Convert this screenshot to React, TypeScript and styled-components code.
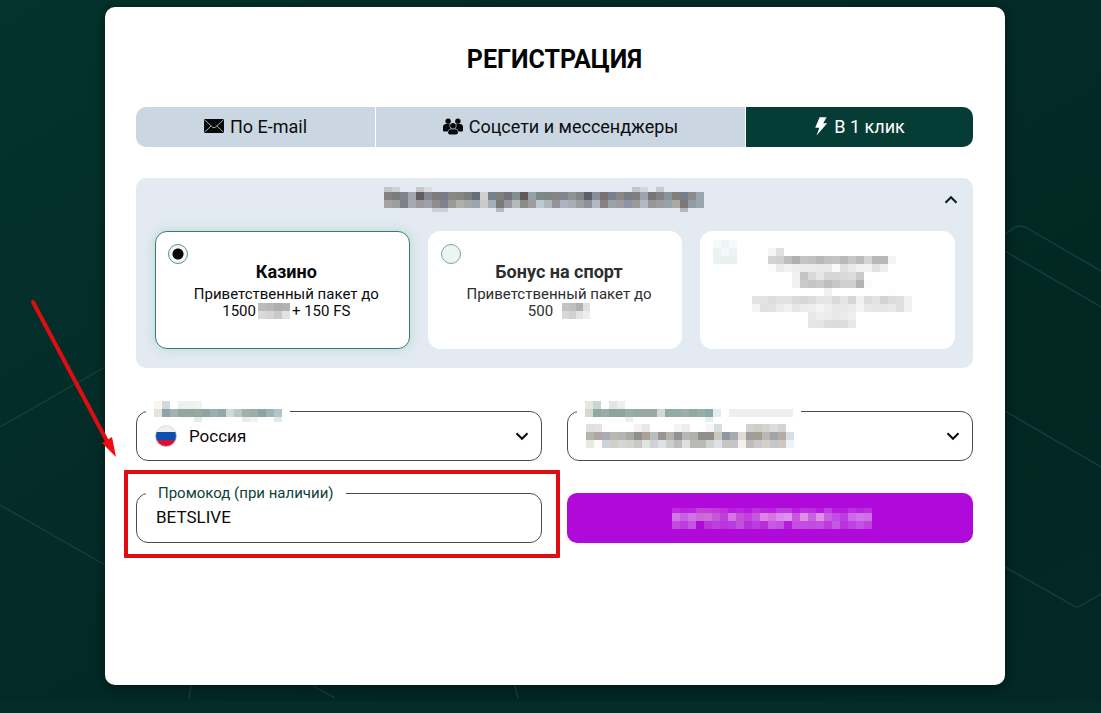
import React, { useState } from "react";
import styled, { createGlobalStyle } from "styled-components";

const GlobalStyle = createGlobalStyle`
  *, *::before, *::after { box-sizing: border-box; }
  body {
    margin: 0;
    background: #03292a;
    font-family: Roboto, "Liberation Sans", sans-serif;
    color: #0a0a0a;
  }
  button, input, select { font-family: inherit; }
`;

const Page = styled.div`
  position: relative;
  min-height: 100vh;
  padding: 7px 0 28px 9px;
  overflow: hidden;
  background: linear-gradient(to bottom, transparent calc(100% - 13px), #042d29 calc(100% - 9px)),
    linear-gradient(150deg, #04322c 0%, #032b27 45%, #022723 70%, #032825 100%);
`;

const Backdrop = styled.svg`
  position: absolute;
  inset: 0;
  width: 100%;
  height: 100%;
`;

const Card = styled.main`
  position: relative;
  max-width: 900px;
  margin: 0 auto;
  padding: 37px 32px 142px 31px;
  border-radius: 10px;
  background: #fff;
  box-shadow: 0 2px 12px rgba(0, 0, 0, 0.45);
`;

const Title = styled.h1`
  margin: 0 0 31px;
  font-size: 25px;
  line-height: 32px;
  font-weight: 700;
  text-align: center;
  color: #050505;
`;

const Tabs = styled.div`
  display: grid;
  grid-template-columns: 239fr 369fr 227fr;
  gap: 1px;
  border-radius: 10px;
  overflow: hidden;
`;

const Tab = styled.button<{ $active?: boolean }>`
  display: flex;
  align-items: center;
  justify-content: center;
  gap: 6px;
  height: 40px;
  padding: 0 0 2px;
  border: 0;
  font-size: 18px;
  color: ${(p) => (p.$active ? "#fff" : "#0b0d10")};
  background: ${(p) => (p.$active ? "#053d36" : "#cad6e1")};
  cursor: pointer;
`;

const BonusPanel = styled.section`
  margin-top: 31px;
  padding: 9px 18px 19px 19px;
  border-radius: 10px;
  background: #e4eaf1;
`;

const BonusHeader = styled.header`
  display: flex;
  align-items: center;
  height: 25px;
  margin-bottom: 19px;
`;

const BonusHeading = styled.div`
  flex: 1;
  display: flex;
  justify-content: center;
`;

const Collapse = styled.button`
  display: flex;
  justify-content: flex-end;
  width: 25px;
  padding: 0;
  margin-right: -3px;
  border: 0;
  background: none;
  color: #0b1a1a;
`;

const BonusList = styled.div`
  display: grid;
  grid-template-columns: repeat(3, 1fr);
  gap: 18px;
`;

const BonusCard = styled.label<{ $selected?: boolean }>`
  display: grid;
  height: 118px;
  padding: 8px 12px;
  border: 1px solid ${(p) => (p.$selected ? "#3f7a72" : "#fff")};
  border-radius: 12px;
  background: #fff;
  color: ${(p) => (p.$selected ? "#0a0a0a" : "#2e2e2e")};
  box-shadow: ${(p) => (p.$selected ? "0 0 12px rgba(90, 190, 165, 0.35)" : "none")};
  cursor: pointer;

  > * { grid-area: 1 / 1; }
`;

const Radio = styled.input`
  appearance: none;
  width: 20px;
  height: 20px;
  margin: 4px 0 0;
  border: 1px solid #7fa39d;
  border-radius: 50%;
  background: #edf5f4;

  &:checked {
    border-color: #5c9088;
    background: radial-gradient(circle, #050505 5px, #f1f8f7 6px);
  }
`;

const BonusText = styled.div<{ $raised?: boolean }>`
  place-self: center;
  padding: ${(p) => (p.$raised ? "0 0 4px 8px" : "1px 0 0 8px")};
  text-align: center;
`;

const BonusName = styled.div`
  margin-bottom: 4px;
  font-size: 18px;
  line-height: 20px;
  font-weight: 700;
`;

const BonusLine = styled.div`
  display: flex;
  align-items: center;
  justify-content: center;
  gap: 2px;
  font-size: 15px;
  line-height: 17px;
`;

const Form = styled.form`
  display: grid;
  grid-template-columns: 1fr 1fr;
  gap: 22px 25px;
  margin-top: 33px;
`;

const FieldSlot = styled.div`
  position: relative;
`;

const Field = styled.fieldset`
  min-width: 0;
  height: 60px;
  margin: 0;
  padding: 0 12px 9px 9px;
  border: 1px solid #4a4d50;
  border-radius: 12px;
`;

const Legend = styled.legend<{ $hidden?: boolean }>`
  height: 20px;
  padding: ${(p) => (p.$hidden ? "0 8px" : "0 12px")};
  font-size: 15px;
  line-height: 20px;
  color: #0f3f39;
`;

const Control = styled.div`
  display: flex;
  align-items: center;
  height: 30px;
  padding-left: 9px;
`;

const Select = styled.select`
  appearance: none;
  flex: 1;
  min-width: 0;
  padding: 0 0 1px;
  border: 0;
  outline: 0;
  background: none;
  font-size: 17px;
  color: #0a0a0a;
`;

const TextInput = styled.input`
  width: 100%;
  padding: 0 0 3px 1px;
  border: 0;
  outline: 0;
  background: none;
  font-size: 17px;
  color: #0a0a0a;
`;

const Flag = styled.svg`
  flex: none;
  margin-right: 12px;
`;

const Submit = styled.button`
  display: flex;
  align-items: center;
  justify-content: center;
  align-self: end;
  height: 50px;
  padding: 0 0 0 4px;
  border: 0;
  border-radius: 10px;
  background: #b00adb;
  cursor: pointer;
`;

const Callout = styled.div`
  position: absolute;
  inset: -13px -18px -15px -12px;
  border: 4px solid #de0d11;
  border-radius: 1px;
  pointer-events: none;
`;

const Arrow = styled.svg`
  position: absolute;
  left: -100px;
  top: -178px;
`;

const MosaicSvg = styled.svg`
  display: block;
  flex: none;
  overflow: visible;
`;

type MosaicProps = { rows: string[]; heights?: number[]; cell?: number };

/* Pixelated block: every row is a list of grey levels (2 digits) or full colours (6 digits); "--" is empty. */
function Mosaic({ rows, heights, cell = 8 }: MosaicProps) {
  const grid = rows.map((r) => r.trim().split(/\s+/));
  const cols = Math.max(...grid.map((r) => r.length));
  const hs = heights ?? grid.map(() => cell);
  const tops = hs.map((_, i) => hs.slice(0, i).reduce((a, b) => a + b, 0));
  const total = hs.reduce((a, b) => a + b, 0);
  return (
    <MosaicSvg width={cols * cell} height={total} shapeRendering="crispEdges" aria-hidden="true">
      {grid.map((row, y) =>
        row.map((c, x) =>
          c === "--" ? null : (
            <rect
              key={`${x}-${y}`}
              x={x * cell}
              y={tops[y]}
              width={cell}
              height={hs[y]}
              fill={`#${c.length === 2 ? c + c + c : c}`}
            />
          )
        )
      )}
    </MosaicSvg>
  );
}

const headerMosaic = [
  "c3c6cb ced1d6 -- -- c5c7cc d9dde3 -- -- -- -- -- -- -- -- -- -- -- -- -- -- -- -- -- -- -- -- -- -- -- -- -- c4c6cc d3d6dd -- c8cbd2 -- -- -- -- --",
  "857f7f 7b7d7b 80838c a0a5af 5f5b5f 85878d 807b7b 777a87 868883 858483 7b7d80 666d78 d0d0d0 75818e 807d7d 737380 7f908f 5f5c57 96a0a8 7c8887 808484 848483 80868e 909293 828486 5c5f68 888e98 776f70 75808c 8a8885 7a7d85 807d80 9da3ad 787474 828285 8a949c 837e7a 737f8b 8c8a87 98a4b0",
  "a3a4a3 9d9f9c 7d808b a6a9b2 9b9a9e 9fa1aa 918c8c 7d8190 999a97 b0afaf a8a7a7 9aa5ae c9c9c9 a5afb9 787c74 9698a1 b1b9bd 8c8989 9d9ca0 bec8ce afb5bc 93939b aeb4bf a8aeb9 9d9ea4 8e8f98 b2b7c1 878182 9ba2ab 9d9da0 8c94a5 9d999b b3b7c1 96969b 9d9da1 99a2a9 aaa9a6 7c7875 919da5 98a5ac",
  "-- -- -- -- -- -- ccd0d6 ccd0d6 -- -- -- -- -- -- b7bbbc -- -- -- -- -- -- -- -- -- -- -- -- -- -- -- -- -- -- -- -- -- -- b5b8bb -- --",
];

const offerMosaic = [
  "-- -- f5 e0 -- -- -- -- -- -- -- -- -- -- -- -- -- -- -- --",
  "-- -- d2 d0 bd b0 c3 c1 b8 c0 c4 b9 c6 bb d4 b8 b8 f3 -- --",
  "-- -- fb ea f2 ee ea ea e9 e9 f9 e0 e9 f0 f2 e1 ee -- -- --",
  "-- -- -- -- -- f1 c3 d8 e6 d6 d6 d8 dc c9 -- -- -- -- -- --",
  "-- -- -- -- -- f0 ca c5 c9 be c6 d0 cf b3 fb -- -- -- -- --",
  "-- -- -- -- -- -- -- -- -- f0 -- -- -- -- -- -- -- fc -- --",
  "e3 e3 dd e2 e2 da d7 db e4 e6 da e4 d6 f1 dc e3 d2 dc de f0",
  "f3 e0 e1 ea f0 e6 ec ee f3 ed e8 e8 eb f4 e7 e6 e6 e9 df f0",
  "-- -- -- -- -- -- -- e8 ee ec e8 ea ef -- -- -- -- -- -- --",
  "-- -- -- -- -- -- -- e6 e4 dd db dd e8 -- -- -- -- -- -- --",
];

const markMosaic = ["f5fbfa edf5f4 f5fbfa", "eaf4f2 f3faf9 eaf4f2", "ebf3f2 e7f2ef e8f1f0"];

const countryMosaic = [
  "f8f6f0 cfdbdb -- edf0f0 eff0f0 f1f3f3 -- -- -- -- -- -- -- -- -- --",
  "e8e4da 8ba5a6 a3b2b0 92a6a4 92a6a0 98a8a0 8da5a4 a0afac 8fa9aa d0d8d2 b8c6c8 a3b0aa 9baeae 8fa39e 9fb3b5 b3c5c8",
  "-- -- -- -- -- e4eae8 -- -- -- -- -- e9eceb f0f3f2 -- -- e2e9e8",
];

const currencyLabelMosaic = [
  "e6e6e2 c8d6d4 -- e2e5e4 eeeeec -- -- -- -- -- -- -- -- -- -- -- -- -- -- -- -- -- -- -- -- --",
  "d6d8d4 8fa8a2 99ada9 8fa39e 8fa49f 9aada9 94aaa6 9aa99c 93aaa5 d0d9d6 8eaaa8 93aaa7 9fada8 8fa8a3 9dada5 8ea9a8 e1ecec -- eeeeee eeeeee eeeeee eeeeee eeeeee eeeeee eeeeee eeeeee",
  "-- -- -- -- -- edf0ef -- -- -- -- -- -- -- -- -- e6eeed -- -- -- -- -- -- -- -- -- --",
];

const currencyMosaic = [
  "e0e0dc e3e3e3 -- -- -- -- f2f2f2 e8e8e8 -- -- -- f4f4f4 ededed -- -- f5f5f5 dadedb -- -- -- cfd2cf cdcdca d3d3d0 d8dedb d5d5d0 --",
  "b7b4ae b0a7a3 a7adb3 b9b8b4 b4b4b3 a8a8a4 8f8f8f ada197 b9bec5 999593 b1b3b2 929292 b5b9b6 b2b0aa 8f908b 8f908b c9c9c0 9197a0 a7abb0 dedcd4 9f9d9a a49e90 b9b9b4 9fa5a9 b5aca4 d6dee9",
  "e8e8e4 fdfbf7 cfd3d5 d0d0cb d3d6d5 d2d2d0 c8c8c7 dfe5e0 d0d3d6 dde2e7 cecfcd bdbdbd dde0dd b9b9b6 b9b9b6 cfd2d0 dde2e7 c6c6c6 c5c5c5 f2f1ea bdbdbb c8c8cd d3d0ca c7c7c7 cfc7c2 edf4f7",
];

const submitMosaic = [
  "bd2fdc ba20dd bb25de c440db c23ed8 c03adb be32da b91fd8 bb25dd b81bdb be32da bb28dc ba20dd c13adc c13adc b91ddd be30dc bd2cdd b71add c13cdc b81bdb b51add bd30dd ba24dd bd2fdd",
  "d078e4 c95fe3 ce74e5 cd68d9 cf6cd9 c358dd bc40da d375e4 c450d8 bf40de c655e0 df83e4 d773e0 da8aee df91f0 c855df dd91e5 c960e0 df91e7 c75ee5 c04ee2 b93de0 cf68e5 d274ec ce6fea",
  "c14be0 bd3ede c454e2 b00adb bb35da bd3fdd ba35dd bb3cdd c150de b52fdb ba3ce0 b72ed9 c858e5 c351e0 b31cdc c54de4 c44be3 c04cdd c250e2 bb3bde c658e7 b832df bd41e3 c450e6 be42e2",
];

function Chevron({ up }: { up?: boolean }) {
  return (
    <svg width="14" height="10" viewBox="0 0 14 10" fill="none" stroke="currentColor" strokeWidth="2" aria-hidden="true">
      <path d={up ? "M1.5 7.8 7 2.2l5.5 5.6" : "M1.5 2.2 7 7.8l5.5-5.6"} />
    </svg>
  );
}

function MailIcon() {
  return (
    <svg width="20" height="14" viewBox="0 0 20 14" aria-hidden="true">
      <rect width="20" height="14" rx="1" fill="#06080a" />
      <path d="M.5.8 8.600 8.200q1.400 1.100 2.800 0L19.500.8M.5 13.200 7 7M19.500 13.200 13 7" fill="none" stroke="#cad6e1" strokeWidth=".8" />
    </svg>
  );
}

function PeopleIcon() {
  return (
    <svg width="20" height="17" viewBox="0 0 21 17" fill="#06080a" aria-hidden="true">
      <circle cx="5.4" cy="2.9" r="2.8" />
      <circle cx="15.6" cy="2.9" r="2.8" />
      <path d="M0 13V9.500Q0 6 3.400 6h2.500q.8 0 1.300.4-1 2.700.9 4.500-2.800.5-3.200 2.900H1.200q-1.200 0-1.200-.8Z" />
      <path d="M21 13V9.500Q21 6 17.600 6h-2.500q-.8 0-1.300.4 1 2.700-.9 4.500 2.800.5 3.200 2.900h3.700q1.200 0 1.200-.8Z" />
      <circle cx="10.500" cy="7.700" r="3" />
      <path d="M5.300 15.300q0-4 3.600-4h3.200q3.600 0 3.600 4 0 1.700-5.200 1.700t-5.200-1.700Z" />
    </svg>
  );
}

function BoltIcon() {
  return (
    <svg width="14" height="19" viewBox="0 0 14 19" fill="#fff" aria-hidden="true">
      <path d="M5.600.3h7L9.200 6.200h4L2.600 18.600l2.700-7.900H1.200Z" />
    </svg>
  );
}

function RussiaFlag() {
  return (
    <Flag width="22" height="22" viewBox="0 0 22 22" aria-hidden="true">
      <clipPath id="flag-round"><circle cx="11" cy="11" r="10.500" /></clipPath>
      <g clipPath="url(#flag-round)">
        <rect width="22" height="8" fill="#f0f0f0" />
        <rect y="7" width="22" height="8" fill="#0f4fb0" />
        <rect y="15" width="22" height="7" fill="#d8102f" />
      </g>
      <circle cx="11" cy="11" r="10.400" fill="none" stroke="#c9cdd2" strokeWidth=".6" />
    </Flag>
  );
}

export default function App() {
  const [bonus, setBonus] = useState("casino");
  const [promo, setPromo] = useState("BETSLIVE");

  return (
    <>
      <GlobalStyle />
      <Page>
        <Backdrop viewBox="0 0 1101 713" preserveAspectRatio="xMidYMid slice" fill="none" stroke="#16423d" strokeWidth="1.300" aria-hidden="true">
          <path d="M0 427 105 367M0 505 105 565M191 686 189 698M313 686 335 698M515 686 518 698" />
          <path d="M1005 234 1014 228Q1019 224 1027 228L1101 271M1005 251 1101 307M1005 411 1101 467M1005 567 1074 606Q1077 608 1080 606L1101 594" />
        </Backdrop>

        <Card>
          <Title>РЕГИСТРАЦИЯ</Title>

          <Tabs>
            <Tab type="button"><MailIcon />По E-mail</Tab>
            <Tab type="button"><PeopleIcon />Соцсети и мессенджеры</Tab>
            <Tab type="button" $active><BoltIcon />В 1 клик</Tab>
          </Tabs>

          <BonusPanel>
            <BonusHeader>
              <BonusHeading>
                <Mosaic rows={headerMosaic} heights={[5, 8, 8, 4]} />
              </BonusHeading>
              <Collapse type="button" aria-expanded="true"><Chevron up /></Collapse>
            </BonusHeader>
            <BonusList>
              <BonusCard $selected={bonus === "casino"}>
                <Radio type="radio" name="bonus" checked={bonus === "casino"} onChange={() => setBonus("casino")} />
                <BonusText>
                  <BonusName>Казино</BonusName>
                  <BonusLine>Приветственный пакет до</BonusLine>
                  <BonusLine>
                    <span>1500</span>
                    <Mosaic rows={["bb b7 af b2", "d9 d4 c9 e2"]} />
                    <span>+ 150 FS</span>
                  </BonusLine>
                </BonusText>
              </BonusCard>
              <BonusCard $selected={bonus === "sport"}>
                <Radio type="radio" name="bonus" checked={bonus === "sport"} onChange={() => setBonus("sport")} />
                <BonusText>
                  <BonusName>Бонус на спорт</BonusName>
                  <BonusLine>Приветственный пакет до</BonusLine>
                  <BonusLine>
                    <span>500</span>
                    <Mosaic rows={["-- c3 bf b0 df", "-- d8 d0 e3 ee"]} cell={7} heights={[8, 8]} />
                  </BonusLine>
                </BonusText>
              </BonusCard>
              <BonusCard as="div">
                <Mosaic rows={markMosaic} />
                <BonusText $raised><Mosaic rows={offerMosaic} /></BonusText>
              </BonusCard>
            </BonusList>
          </BonusPanel>

          <Form onSubmit={(e) => e.preventDefault()}>
            <Field>
              <Legend $hidden><Mosaic rows={countryMosaic} heights={[8, 8, 5]} /></Legend>
              <Control>
                <RussiaFlag />
                <Select id="country" aria-label="Россия">
                  <option>Россия</option>
                </Select>
                <Chevron />
              </Control>
            </Field>

            <Field>
              <Legend $hidden><Mosaic rows={currencyLabelMosaic} heights={[8, 8, 5]} /></Legend>
              <Control>
                <Mosaic rows={currencyMosaic} />
                <Select id="currency">
                  <option />
                </Select>
                <Chevron />
              </Control>
            </Field>

            <FieldSlot>
              <Field>
                <Legend><label htmlFor="promo">Промокод (при наличии)</label></Legend>
                <Control>
                  <TextInput id="promo" value={promo} onChange={(e) => setPromo(e.target.value)} />
                </Control>
              </Field>
              <Callout>
                <Arrow width="100" height="170" viewBox="28 296 100 170" aria-hidden="true">
                  <path d="M33 302 108 443" stroke="#de0d11" strokeWidth="4" strokeLinecap="round" />
                  <path d="M102 443 112 437 116 457Z" fill="#f00c10" />
                </Arrow>
              </Callout>
            </FieldSlot>

            <Submit type="submit"><Mosaic rows={submitMosaic} heights={[5, 8, 8]} /></Submit>
          </Form>
        </Card>
      </Page>
    </>
  );
}
